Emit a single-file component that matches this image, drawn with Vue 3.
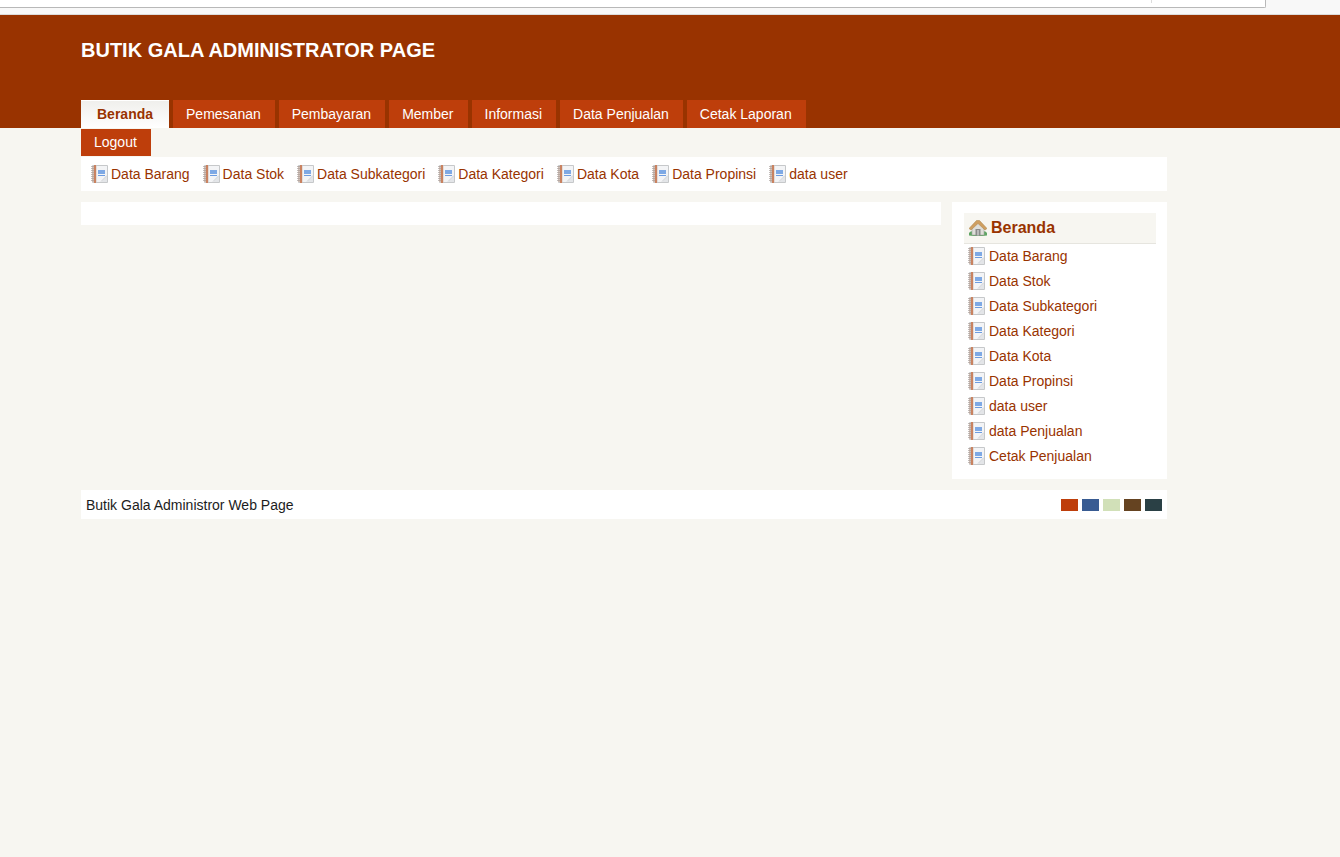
<template>
  <div class="page">
    <div class="toolbar">
      <input class="toolbar-address" type="text" aria-label="Address" />
      <div class="toolbar-actions"><span class="toolbar-divider"></span></div>
    </div>

    <header class="header">
      <div class="wrap">
        <h1 class="title">BUTIK GALA ADMINISTRATOR PAGE</h1>
        <nav class="tabs">
          <a
            v-for="tab in tabs"
            :key="tab"
            href="#"
            class="tab"
            :class="{ active: tab === activeTab }"
            @click.prevent="activeTab = tab"
          >{{ tab }}</a>
        </nav>
      </div>
    </header>

    <div class="wrap">
      <div class="tabs tabs-second">
        <a href="#" class="tab tab-logout">Logout</a>
      </div>

      <nav class="submenu">
        <a v-for="item in submenu" :key="item" href="#" class="menu-link">
          <svg class="icon" viewBox="0 0 18 18"><use href="#icon-book" /></svg>
          <span>{{ item }}</span>
        </a>
      </nav>

      <div class="columns">
        <main class="content"></main>

        <aside class="sidebar">
          <h2 class="sidebar-title">
            <!-- house -->
            <svg class="icon" viewBox="0 0 18 18">
              <path d="M0 14q2-3 4-1h10q2-2 4 1v2.500q-9 1-18 0z" fill="#5fa564" />
              <path d="M3 9l6-6 6 6v7H3z" fill="#deded9" stroke="#a3a39d" stroke-width=".6" />
              <path d="M6.500 10h5v6.500h-5z" fill="#8b8b8b" />
              <path d="M8 11h2v5.500H8z" fill="#b9b9b9" />
              <path d="M0 9.500L7.500 1.500h3L18 9.500 16 11 9 4.500 2 11z" fill="#cf9f61" stroke="#a98049" stroke-width=".5" />
            </svg>
            <span>Beranda</span>
          </h2>
          <ul class="sidebar-list">
            <li v-for="item in sidebar" :key="item">
              <a href="#" class="menu-link">
                <svg class="icon" viewBox="0 0 18 18"><use href="#icon-book" /></svg>
                <span>{{ item }}</span>
              </a>
            </li>
          </ul>
        </aside>
      </div>

      <footer class="footer">
        <span>Butik Gala Administror Web Page</span>
        <div class="swatches">
          <button
            v-for="color in colors"
            :key="color"
            type="button"
            class="swatch"
            :class="color"
            :aria-label="color"
          ></button>
        </div>
      </footer>
    </div>

    <!-- shared notebook icon -->
    <svg class="sprite" aria-hidden="true">
      <symbol id="icon-book" viewBox="0 0 18 18">
        <path d="M1.500.5h15v17h-15z" fill="#f3f4f6" stroke="#c6c8ca" />
        <path d="M16 11v6h-6z" fill="#e3e5e8" />
        <path d="M10 16.500l6-6" stroke="#cfd1d4" />
        <path d="M1 1h2v16H1z" fill="#d0beb5" />
        <path d="M3 0h2v18H3z" fill="#c98260" />
        <path d="M5 1h1v16H5z" fill="#e3dcda" />
        <path d="M0 1.500h3M0 3.500h3M0 5.500h3M0 7.500h3M0 9.500h3M0 11.500h3M0 13.500h3M0 15.500h3" stroke="#aaa09b" stroke-opacity=".7" />
        <path d="M7 5h7v4H7z" fill="#7ea9e5" />
        <path d="M7 10h7v1H7z" fill="#6d9ce0" />
      </symbol>
    </svg>
  </div>
</template>

<script setup>
import { ref } from 'vue'

const tabs = [
  'Beranda',
  'Pemesanan',
  'Pembayaran',
  'Member',
  'Informasi',
  'Data Penjualan',
  'Cetak Laporan'
]
const activeTab = ref('Beranda')

const submenu = [
  'Data Barang',
  'Data Stok',
  'Data Subkategori',
  'Data Kategori',
  'Data Kota',
  'Data Propinsi',
  'data user'
]
const sidebar = [...submenu, 'data Penjualan', 'Cetak Penjualan']

const colors = ['orange', 'blue', 'green', 'brown', 'dark']
</script>

<style>
body {
  margin: 0;
  background: #f7f6f1;
}
</style>

<style scoped>
.page {
  font-family: "Liberation Sans", Arial, sans-serif;
  font-size: 14px;
  line-height: 18px;
  color: #1c1c1c;
}

.page * {
  box-sizing: border-box;
}

.wrap {
  margin: 0 173px 0 81px;
}

/* Toolbar */
.toolbar {
  display: flex;
  height: 15px;
  padding-right: 74px;
  background: #f8f8f8;
  border-bottom: 1px solid #dcdcdc;
}

.toolbar-address {
  flex: 1;
  height: 8px;
  padding: 0;
  border: 0;
  border-bottom: 1px solid #b8b8b8;
  background: #fff;
  outline: none;
}

.toolbar-actions {
  width: 115px;
  height: 8px;
  background: #fff;
  border-right: 1px solid #b8b8b8;
  border-bottom: 1px solid #b8b8b8;
  border-bottom-right-radius: 2px;
}

.toolbar-divider {
  display: block;
  width: 1px;
  height: 3px;
  background: #dcdcdc;
}

/* Header */
.header {
  background: #993300;
}

.title {
  margin: 0;
  padding: 22px 0 37px;
  font-size: 20px;
  line-height: 26px;
  color: #fff;
}

.tabs {
  display: flex;
  flex-wrap: wrap;
  gap: 4px;
}

.tab {
  padding: 0 14px 0 13px;
  line-height: 28px;
  color: #fff;
  background: #be3e0b;
  text-decoration: none;
}

.tab.active {
  padding: 0 16px;
  font-weight: bold;
  color: #993300;
  background: linear-gradient(#f0efec, #fff);
  border-top: 1px solid #fff;
  line-height: 27px;
}

.tabs-second {
  padding: 1px 0;
}

.tab-logout {
  line-height: 27px;
}

/* Menus */
.submenu {
  display: flex;
  flex-wrap: wrap;
  gap: 13px;
  padding: 8px 10px;
  background: #fff;
}

.menu-link {
  display: flex;
  align-items: center;
  gap: 2px;
  color: #993300;
  text-decoration: none;
}

.icon {
  flex: none;
  width: 18px;
  height: 18px;
}

.columns {
  display: grid;
  grid-template-columns: 4fr 1fr;
  align-items: start;
  gap: 11px;
  margin: 11px 0;
}

.content {
  height: 23px;
  background: #fff;
}

.sidebar {
  padding: 11px 11px 11px 12px;
  background: #fff;
}

.sidebar-title {
  display: flex;
  align-items: center;
  gap: 4px;
  height: 31px;
  margin: 0;
  padding: 0 5px;
  font-size: 16px;
  color: #993300;
  background: #f7f6f1;
  border-bottom: 1px solid #e6e5df;
}

.sidebar-list {
  display: grid;
  gap: 1px;
  margin: 0;
  padding: 0 4px;
  list-style: none;
}

.sidebar-list .menu-link {
  gap: 3px;
  height: 24px;
}

/* Footer */
.footer {
  display: flex;
  align-items: center;
  justify-content: space-between;
  height: 29px;
  padding: 0 5px;
  background: #fff;
}

.swatches {
  display: flex;
  gap: 4px;
}

.swatch {
  width: 17px;
  height: 12px;
  padding: 0;
  border: 0;
  cursor: pointer;
}

.orange { background: #be3e0b; }
.blue { background: #385b92; }
.green { background: #d1e0b8; }
.brown { background: #654321; }
.dark { background: #2a4045; }

.sprite {
  display: none;
}
</style>
